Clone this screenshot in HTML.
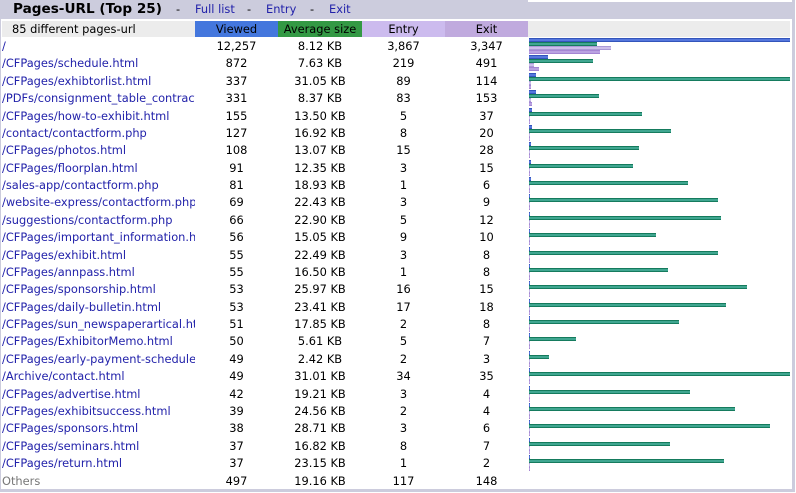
<!DOCTYPE html>
<html><head><meta charset="utf-8"><style>
body{margin:0;width:796px;height:493px;background:#fff;font-family:"DejaVu Sans",Verdana,sans-serif;font-size:11.4px;overflow:hidden;position:relative}
#frame{position:absolute;left:0;top:0;width:791px;height:489px;border-right:3px solid #ccccdd;border-bottom:3px solid #ccccdd;border-left:1px solid #ccccdd}
#title{position:absolute;left:0;top:0;width:528px;height:19px;background:#ccccdd;font-weight:bold;font-size:13.6px;line-height:19px;padding-left:13px;box-sizing:border-box;white-space:nowrap}
#title2{position:absolute;left:528px;top:2px;width:265px;height:17px;background:#ccccdd}
#title a{position:absolute;top:0;color:#2222aa;font-weight:normal;font-size:11.4px;text-decoration:none}
#title span.d{position:absolute;top:0;font-weight:normal;font-size:11.4px}
.h{position:absolute;top:21px;height:16px;line-height:16px;text-align:center}
.c{position:absolute;height:17px;line-height:17px;white-space:nowrap;overflow:hidden}
.l{left:2px;width:193px;color:#2222aa}
.n{text-align:center}
.b{position:absolute;left:529px;height:4px}
.bv{background:linear-gradient(#2244aa,#6688ee 50%,#2244aa)}
.bg{background:linear-gradient(#006644,#55bbaa 50%,#006644)}
.be{background:linear-gradient(#9988cc,#ddd0f4 50%,#9988cc)}
.bx{background:linear-gradient(#9977cc,#c4b0e8 50%,#9977cc)}
</style></head><body>
<div id="frame"></div>
<div id="title">Pages-URL (Top 25)<span class="d" style="left:176px">-</span><a style="left:195px">Full list</a><span class="d" style="left:247px">-</span><a style="left:266px">Entry</a><span class="d" style="left:310px">-</span><a style="left:329px">Exit</a></div>
<div id="title2"></div>
<div class="h" style="left:2px;width:193px;background:#ececec;text-align:left;padding-left:10px;box-sizing:border-box">85 different pages-url</div>
<div class="h" style="left:195px;width:83px;background:#4477dd">Viewed</div>
<div class="h" style="left:278px;width:84px;background:#339944">Average size</div>
<div class="h" style="left:362px;width:83px;background:#ccbbee">Entry</div>
<div class="h" style="left:445px;width:83px;background:#c0aade">Exit</div>
<div class="h" style="left:528px;width:262px;background:#ececec"></div>
<div id="rows"></div>
<script>
var d=[["/",12257,"8.12",3867,3347],["/CFPages/schedule.html",872,"7.63",219,491],["/CFPages/exhibtorlist.html",337,"31.05",89,114],["/PDFs/consignment_table_contract.pdf",331,"8.37",83,153],["/CFPages/how-to-exhibit.html",155,"13.50",5,37],["/contact/contactform.php",127,"16.92",8,20],["/CFPages/photos.html",108,"13.07",15,28],["/CFPages/floorplan.html",91,"12.35",3,15],["/sales-app/contactform.php",81,"18.93",1,6],["/website-express/contactform.php",69,"22.43",3,9],["/suggestions/contactform.php",66,"22.90",5,12],["/CFPages/important_information.html",56,"15.05",9,10],["/CFPages/exhibit.html",55,"22.49",3,8],["/CFPages/annpass.html",55,"16.50",1,8],["/CFPages/sponsorship.html",53,"25.97",16,15],["/CFPages/daily-bulletin.html",53,"23.41",17,18],["/CFPages/sun_newspaperartical.html",51,"17.85",2,8],["/CFPages/ExhibitorMemo.html",50,"5.61",5,7],["/CFPages/early-payment-schedule.html",49,"2.42",2,3],["/Archive/contact.html",49,"31.01",34,35],["/CFPages/advertise.html",42,"19.21",3,4],["/CFPages/exhibitsuccess.html",39,"24.56",2,4],["/CFPages/sponsors.html",38,"28.71",3,6],["/CFPages/seminars.html",37,"16.82",8,7],["/CFPages/return.html",37,"23.15",1,2]];
var h="",W=261;
function f(n){return n.toLocaleString("en-US")}
function bw(v,m){return Math.max(1,Math.round(v/m*W))}
for(var i=0;i<=25;i++){var t=Math.round(38+i*17.38);var r=i<25?d[i]:["Others",497,"19.16",117,148];
h+='<div class="c l" style="top:'+t+'px'+(i==25?';color:#777':'')+'">'+r[0]+'</div>';
h+='<div class="c n" style="top:'+t+'px;left:195px;width:83px">'+f(r[1])+'</div>';
h+='<div class="c n" style="top:'+t+'px;left:278px;width:84px">'+r[2]+' KB</div>';
h+='<div class="c n" style="top:'+t+'px;left:362px;width:83px">'+f(r[3])+'</div>';
h+='<div class="c n" style="top:'+t+'px;left:445px;width:83px">'+f(r[4])+'</div>';
if(i<25){h+='<div class="b bv" style="top:'+t+'px;width:'+bw(r[1],12257)+'px"></div>';
h+='<div class="b bg" style="top:'+(t+4)+'px;width:'+bw(parseFloat(r[2]),31.05)+'px"></div>';
h+='<div class="b be" style="top:'+(t+8)+'px;width:'+bw(r[3],12257)+'px"></div>';
h+='<div class="b bx" style="top:'+(t+12)+'px;width:'+bw(r[4],12257)+'px"></div>';}}
document.getElementById("rows").innerHTML=h;
</script>
</body></html>
